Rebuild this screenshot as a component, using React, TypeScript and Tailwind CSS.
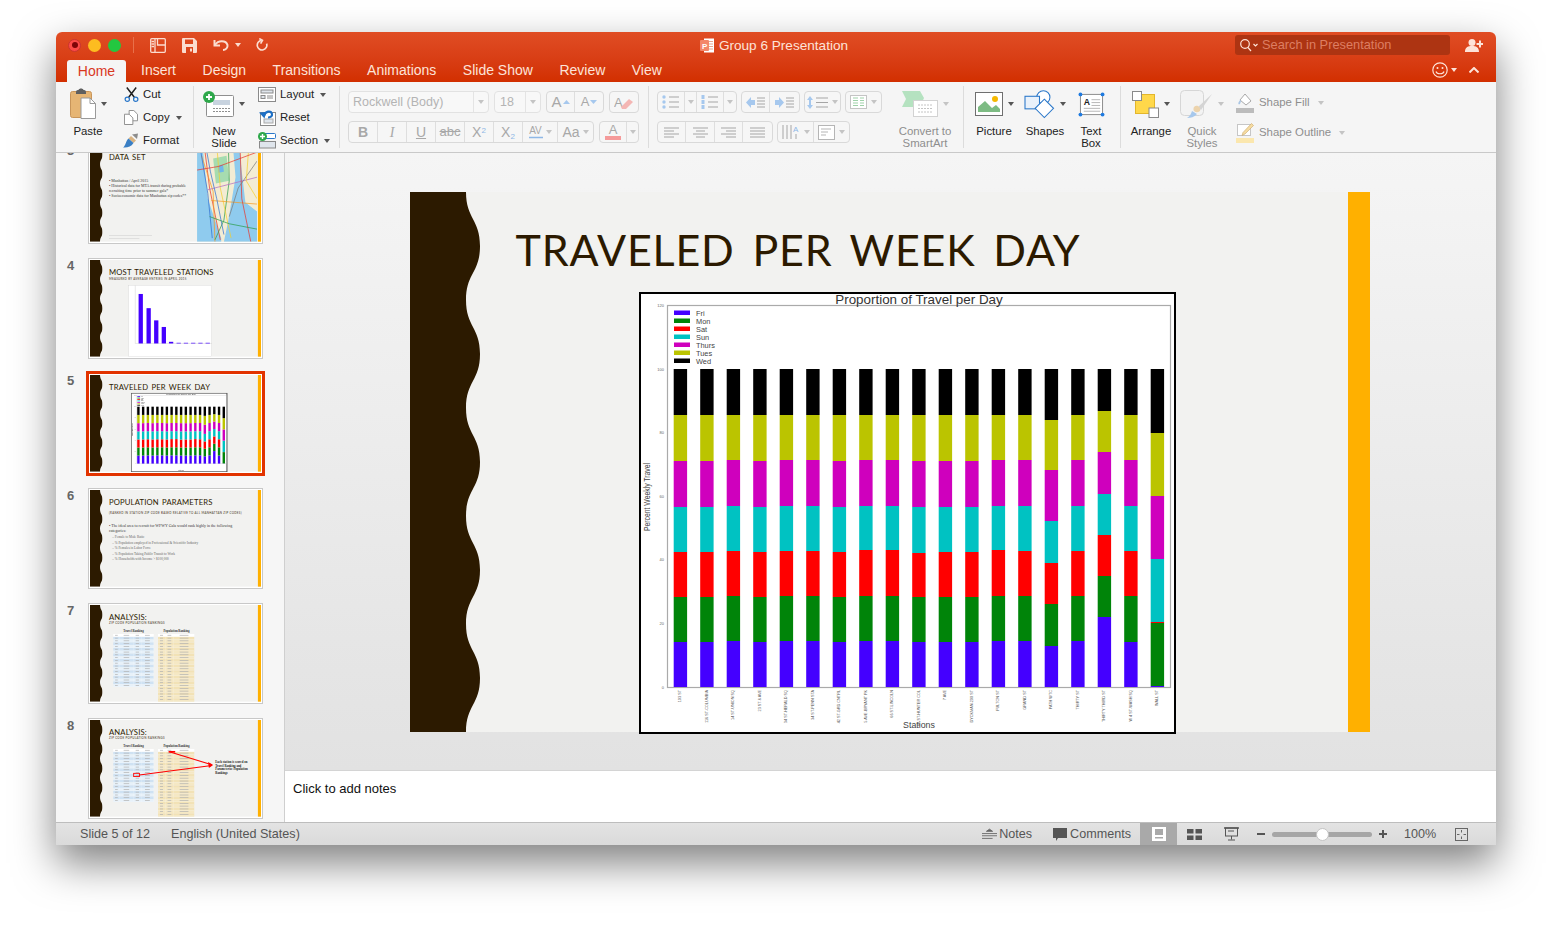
import type { ReactNode } from 'react';

const STATIONS = ['103 ST', '116 ST-COLUMBIA', '14 ST-UNION SQ', '23 ST-6 AVE', '34 ST-HERALD SQ', '34 ST-PENN STA', '42 ST-GRD CNTRL', '5 AVE-BRYANT PK', '66 ST-LINCOLN', '68 ST-HUNTER COL', '7 AVE', 'DYCKMAN-200 ST', 'FULTON ST', 'GRAND ST', 'PATH WTC', 'THIRTY ST', 'THIRTY THIRD ST', 'W 4 ST-WASH SQ', 'WALL ST'];
const COLORS = ['#4400ff', '#008409', '#ff0000', '#00c2c2', '#cf00bd', '#bbc400', '#000000'];
const LEGEND = ['Fri', 'Mon', 'Sat', 'Sun', 'Thurs', 'Tues', 'Wed'];

// top edge of each stacked segment, in chart pixels
const TOPS = [
  [642, 597, 552, 507, 461, 415], [642, 597, 552, 507, 461, 415], [641, 596, 551, 506, 460, 415],
  [642, 597, 552, 507, 461, 415], [641, 596, 551, 506, 460, 415], [641, 596, 551, 506, 460, 415],
  [642, 597, 552, 507, 461, 415], [641, 596, 550, 506, 460, 415], [641, 596, 550, 506, 460, 415],
  [642, 597, 553, 507, 461, 415], [642, 597, 552, 507, 461, 415], [642, 597, 552, 507, 461, 415],
  [641, 596, 550, 506, 460, 415], [641, 596, 551, 506, 460, 415], [646, 604, 563, 521, 470, 420],
  [641, 596, 551, 506, 460, 415], [617, 576, 535, 494, 452, 411], [642, 596, 551, 506, 460, 415],
  [686, 623, 622, 559, 496, 433],
];

function Chart({ className, frame = 2 }: { className?: string; frame?: number }) {
  return (
    <svg viewBox="0 0 537 442" className={className}>
      <rect x="1" y="1" width="535" height="440" fill="#fff" stroke={frame > 2 ? '#555' : '#000'} strokeWidth={frame} />
      <rect x="28.5" y="13.5" width="503" height="382" fill="#fff" stroke="#aaa" strokeWidth="1.2" />
      <text x="280" y="12" textAnchor="middle" fontSize="13.4" fill="#333" fontFamily="Liberation Sans">Proportion of Travel per Day</text>
      {LEGEND.map((l, i) => (
        <g key={l}>
          <rect x="35" y={18.5 + i * 8} width="16" height="4.5" fill={COLORS[i]} />
          <text x="57" y={23.5 + i * 8} fontSize="7.4" fill="#444" fontFamily="Liberation Sans">{l}</text>
        </g>
      ))}
      {[120, 100, 80, 60, 40, 20, 0].map((t, i) => (
        <text key={t} x="25" y={15 + i * 63.6} textAnchor="end" fontSize="4" fill="#666" fontFamily="Liberation Sans">{t}</text>
      ))}
      <text transform="translate(11 205) rotate(-90)" textAnchor="middle" fontSize="9" fill="#444" fontFamily="Liberation Sans" textLength="68" lengthAdjust="spacingAndGlyphs">Percent Weekly Travel</text>
      {TOPS.map((tops, b) => {
        const x = 34.7 + b * 26.5;
        const edges = [687, ...tops, 369];
        return (
          <g key={b}>
            {COLORS.map((c, s) => (
              <rect key={c} x={x} y={edges[s + 1] - 292} width="13.4" height={edges[s] - edges[s + 1]} fill={c} />
            ))}
            <text transform={`translate(${x + 7.5} 398) rotate(-90)`} textAnchor="end" fontSize="3.8" fill="#555" fontFamily="Liberation Sans">{STATIONS[b]}</text>
          </g>
        );
      })}
      <text x="280" y="436" textAnchor="middle" fontSize="8.8" fill="#444" fontFamily="Liberation Sans">Stations</text>
    </svg>
  );
}

const WAVE = 'M0 0H56' + [0, 108, 216, 324, 432].map((y) => `C56 ${y + 27} 70 ${y + 27} 70 ${y + 54}C70 ${y + 81} 56 ${y + 81} 56 ${y + 108}`).join('') + 'V540H0Z';

function SlideFrame({ title, sub, subTop = 'top-[90px]', thumb, children }: { title: string; sub?: string; subTop?: string; thumb?: boolean; children?: ReactNode }) {
  return (
    <div className="relative w-[960px] h-[540px] shrink-0 bg-[#f2f2f0]">
      <svg viewBox="0 0 70 540" className="absolute left-0 top-0 w-[70px] h-[540px]"><path d={WAVE} fill="#2c1a00" /></svg>
      <div className="absolute right-0 top-0 w-[22px] h-[540px] bg-[#ffb000]" />
      <div className={`absolute left-[106px] ${thumb ? 'top-[38px]' : 'top-[28px]'} font-['Lato',sans-serif] text-[43px] leading-[60px] tracking-[0.8px] [word-spacing:6px] text-[#2c1a00] whitespace-nowrap`}>{title}</div>
      {sub && <div className={`absolute left-[106px] ${subTop} font-['Lato',sans-serif] text-[16px] leading-[22px] tracking-[1.8px] text-[#3a2a10] whitespace-nowrap`}>{sub}</div>}
      {children}
    </div>
  );
}

function SubwayMap() {
  return (
    <svg viewBox="0 0 335 540" className="absolute left-[598px] top-0 w-[335px] h-[540px]" preserveAspectRatio="none">
      <rect width="335" height="540" fill="#f3ecd4" />
      <path d="M0 0H30L60 300 135 520V540H0Z" fill="#8fcbee" />
      <path d="M200 0L215 180 175 420 150 540H335V370L270 320 250 150 235 0Z" fill="#8fcbee" />
      <path d="M270 320L335 280V370Z" fill="#f3ecd4" />
      <path d="M90 75L165 60 180 200 105 215Z" fill="#a6dcb0" />
      <path d="M115 115L145 110 150 150 120 155Z" fill="#6fb7e8" />
      <g fill="none" strokeWidth="4">
        <path d="M40 0L70 240 130 530" stroke="#e8352b" />
        <path d="M25 60L90 260 100 540" stroke="#f59a23" />
        <path d="M175 0L180 200 150 420 100 530" stroke="#2a9d4a" />
        <path d="M15 0L60 270 85 520" stroke="#2f6fd0" />
        <path d="M110 0L130 240 190 520" stroke="#f5cf2d" />
        <path d="M60 250L335 180" stroke="#b06cc0" />
        <path d="M80 310L335 330" stroke="#f59a23" />
        <path d="M240 0L250 300 300 540" stroke="#e8352b" />
        <path d="M335 90L230 240 180 400" stroke="#7a7a7a" />
        <path d="M55 40L75 150 110 300 150 500" stroke="#2f6fd0" />
        <path d="M290 0L275 200 335 300" stroke="#f5cf2d" />
        <path d="M70 400L180 440 335 470" stroke="#2a9d4a" />
        <path d="M0 140L120 120 335 40" stroke="#e8352b" />
      </g>
    </svg>
  );
}

function Bullet({ children, sub }: { children: ReactNode; sub?: boolean }) {
  return <li className={sub ? 'pl-[18px] text-[19px] leading-[31px] text-[#666]' : 'text-[22px] leading-[24px] text-[#333] mb-[8px]'}>{sub ? '– ' : '• '}{children}</li>;
}

function DataTable({ rows, cols, tint, light }: { rows: number; cols: string; tint: string; light: string }) {
  const cells = cols === 'travel' ? [36, 76, 46, 66] : [40, 48, 116];
  return (
    <div className="flex flex-col w-full">
      {Array.from({ length: rows }).map((_, r) => (
        <div key={r} className="flex h-[15.6px] border-b border-white" style={{ backgroundColor: r === 0 ? '#fff' : r % 2 ? tint : light }}>
          {cells.map((w, c) => (
            <div key={c} className="flex items-center justify-center border-r border-white" style={{ width: w }}>
              <div className="h-[4px] bg-[#b4b4b4]" style={{ width: w * 0.42 }} />
            </div>
          ))}
        </div>
      ))}
    </div>
  );
}

function AnalysisTables() {
  return (
    <>
      <div className="absolute left-[130px] top-[134px] w-[226px] font-['Liberation_Serif',serif] font-bold text-[17px] text-center text-[#333]">Travel Ranking</div>
      <div className="absolute left-[380px] top-[134px] w-[206px] font-['Liberation_Serif',serif] font-bold text-[17px] text-center text-[#333]">Population Ranking</div>
      <div className="absolute left-[130px] top-[162px] w-[226px]"><DataTable rows={19} cols="travel" tint="#cfe2f3" light="#e7f1f9" /></div>
      <div className="absolute left-[380px] top-[162px] w-[204px] h-[378px] overflow-hidden"><DataTable rows={25} cols="pop" tint="#f2e2b6" light="#f5e8c4" /></div>
    </>
  );
}

function slideFor(n: number, thumb = false) {
  if (n === 3) {
    return (
      <SlideFrame thumb={thumb} title="DATA SET">
        <SubwayMap />
        <ul className="absolute left-[106px] top-[186px] w-[465px] font-['Liberation_Serif',serif]">
          <Bullet>Manhattan / April 2015</Bullet>
          <Bullet>Historical data for MTA transit during probable recruiting time prior to summer gala*</Bullet>
          <Bullet>Socioeconomic data for Manhattan zip codes**</Bullet>
        </ul>
        <div className="absolute left-[106px] top-[505px] w-[240px] h-[3px] bg-[#cfcfcf]" />
        <div className="absolute left-[106px] top-[522px] w-[170px] h-[3px] bg-[#cfcfcf]" />
      </SlideFrame>
    );
  }
  if (n === 4) {
    const bars = [[31, 150], [55, 107], [78, 70], [101, 50], [123, 5], [146, 2], [168, 2], [190, 2], [212, 2], [234, 2]];
    return (
      <SlideFrame thumb={thumb} title="MOST TRAVELED STATIONS" sub="MEASURED BY AVERAGE ENTRIES IN APRIL 2015" subTop="top-[97px]">
        <svg viewBox="0 0 253 217" className="absolute left-[212px] top-[140px] w-[471px] h-[400px]">
          <rect x="0.5" y="0.5" width="252" height="216" fill="#fff" stroke="#ccc" />
          <path d="M21 1V177H253" fill="none" stroke="#bbb" strokeWidth="1" />
          {bars.map(([x, h]) => <rect key={x} x={x} y={177 - h} width="13" height={h} fill="#4400ff" />)}
        </svg>
      </SlideFrame>
    );
  }
  if (n === 5) return <SlideFrame thumb={thumb} title="TRAVELED PER WEEK DAY"><Chart frame={thumb ? 6 : 2} className="absolute left-[229px] top-[100px] w-[537px] h-[442px]" /></SlideFrame>;
  if (n === 6) {
    return (
      <SlideFrame thumb={thumb} title="POPULATION PARAMETERS" sub="(RANKED IN STATION ZIP CODE BASED RELATIVE TO ALL MANHATTAN ZIP CODES)" subTop="top-[118px]">
        <ul className="absolute left-[106px] top-[190px] w-[720px] font-['Liberation_Serif',serif]">
          <Bullet>The ideal area to recruit for WFWY Gala would rank highly in the following categories:</Bullet>
          <Bullet sub>Female to Male Ratio</Bullet>
          <Bullet sub>% Population employed in Professional &amp; Scientific Industry</Bullet>
          <Bullet sub>% Females in Labor Force</Bullet>
          <Bullet sub>% Population Taking Public Transit to Work</Bullet>
          <Bullet sub>% Households with Income &gt; $100,000</Bullet>
        </ul>
      </SlideFrame>
    );
  }
  return (
    <SlideFrame thumb={thumb} title="ANALYSIS:" sub="ZIP CODE POPULATION RANKINGS">
      <AnalysisTables />
      {n === 8 && (
        <>
          <svg viewBox="0 0 960 540" className="absolute left-0 top-0 w-[960px] h-[540px]">
            <rect x="244" y="298" width="32" height="18" fill="none" stroke="#f00" strokeWidth="5" />
            <rect x="439" y="173" width="37" height="9" fill="#f00" />
            <path d="M443 177L680 250M276 307L680 254" stroke="#f00" strokeWidth="6" fill="none" />
            <path d="M688 252L660 234 664 268Z" fill="#f00" />
          </svg>
          <div className="absolute left-[700px] top-[222px] w-[212px] font-['Liberation_Serif',serif] font-bold text-[17px] leading-[22px] text-[#222]">Each station is scored on Travel Ranking and Parameterize Population Rankings</div>
        </>
      )}
    </SlideFrame>
  );
}

function Thumb({ n, active }: { n: number; active?: boolean }) {
  return (
    <div className="flex h-[101px] mb-[14px]">
      <div className="w-[32px] pl-[11px] text-[13px] leading-[15px] font-bold text-[#666]">{n}</div>
      <div className={active ? 'w-[175px] h-[101px] p-px bg-white border border-[#e23300] outline-2 outline-[#e23300]' : 'w-[175px] h-[101px] p-px bg-white border border-[#c8c8c8]'}>
        <div className="w-[171px] h-[97px] overflow-hidden">
          <div className="origin-top-left scale-[0.179] w-[960px] h-[540px]">{slideFor(n, true)}</div>
        </div>
      </div>
    </div>
  );
}

/* ---------- ribbon icons ---------- */

function Caret({ className = 'text-[#555]' }: { className?: string }) {
  return <svg viewBox="0 0 6 4" className={`w-[6px] h-[4px] shrink-0 ${className}`}><path d="M0 0H6L3 4Z" fill="currentColor" /></svg>;
}

const PasteIcon = () => (
  <svg viewBox="0 0 26 32" className="w-[26px] h-[32px]">
    <rect x="0.5" y="3.5" width="21" height="26" rx="2" fill="#e6b574" stroke="#c8955a" />
    <path d="M6 4C6 2 8 2 8.5 2 9 0 13 0 13.5 2 14 2 16 2 16 4V6H6Z" fill="#5f5f5f" />
    <path d="M11 10H20L25.5 15.5V30.5H11Z" fill="#fff" stroke="#9a9a9a" />
    <path d="M20 10V15.5H25.5" fill="none" stroke="#9a9a9a" />
  </svg>
);
const CutIcon = () => (
  <svg viewBox="0 0 16 16" className="w-[15px] h-[15px]" fill="none">
    <path d="M3 0.5L11 11M13 0.5L5 11" stroke="#222" strokeWidth="1.6" />
    <circle cx="3.5" cy="13" r="2.3" stroke="#2a77c9" strokeWidth="1.3" />
    <circle cx="12.5" cy="13" r="2.3" stroke="#2a77c9" strokeWidth="1.3" />
  </svg>
);
const CopyIcon = () => (
  <svg viewBox="0 0 15 16" className="w-[14px] h-[15px]" fill="#fff" stroke="#8a8a8a">
    <path d="M5.5 0.5H10.5L14.5 4.5V11.5H5.5Z" />
    <path d="M0.5 4.5H5.5L9.5 8.5V15.5H0.5Z" />
  </svg>
);
const FormatIcon = () => (
  <svg viewBox="0 0 16 15" className="w-[16px] h-[15px]">
    <path d="M9 1.5L15 0.5 14 6Z" fill="#8c8c8c" />
    <path d="M8 3L13 7.5 10.5 10 5.5 5.5Z" fill="#d9b382" />
    <path d="M5.5 5.5L10.5 10C8 14 4 15 0 14.5 3 12.5 2.5 8 5.5 5.5Z" fill="#3a7fc4" />
  </svg>
);
const NewSlideIcon = () => (
  <svg viewBox="0 0 31 27" className="w-[31px] h-[27px]">
    <rect x="3.5" y="4.5" width="27" height="21" rx="1" fill="#fff" stroke="#8f8f8f" />
    <rect x="10" y="9" width="17" height="5" fill="#c8d3df" />
    <path d="M10 17.5H27M10 20.5H27" stroke="#8f8f8f" strokeDasharray="2 1" />
    <circle cx="6" cy="6" r="6" fill="#2ea84a" />
    <path d="M6 3V9M3 6H9" stroke="#fff" strokeWidth="1.8" />
  </svg>
);
const LayoutIcon = () => (
  <svg viewBox="0 0 18 15" className="w-[18px] h-[15px]" fill="none" stroke="#8a8a8a">
    <rect x="0.5" y="0.5" width="17" height="14" fill="#fff" />
    <rect x="3" y="3" width="12" height="3" fill="#dfe5ec" />
    <rect x="3" y="8.5" width="4" height="3" fill="#dfe5ec" />
    <path d="M9 9H15M9 11H15" />
  </svg>
);
const ResetIcon = () => (
  <svg viewBox="0 0 18 17" className="w-[18px] h-[17px]" fill="none">
    <rect x="2.5" y="3.5" width="15" height="13" fill="#fff" stroke="#8a8a8a" />
    <rect x="6" y="10" width="9" height="4" fill="#dfe5ec" stroke="#a8a8a8" />
    <path d="M6 7C7 2 13 1 14 5 14.5 7.5 12 8.5 10 8.5" stroke="#1e6fc4" strokeWidth="2.2" />
    <path d="M1 3.5L8 3 6.5 9.5Z" fill="#1e6fc4" />
  </svg>
);
const SectionIcon = () => (
  <svg viewBox="0 0 18 17" className="w-[18px] h-[17px]" fill="none">
    <rect x="5.5" y="1.5" width="12" height="5" rx="1" fill="#fff" stroke="#2a77c9" />
    <rect x="1.5" y="9.5" width="16" height="6.5" fill="#dfe5ec" stroke="#8a8a8a" />
    <circle cx="4.5" cy="4.5" r="4.5" fill="#2ea84a" />
    <path d="M4.5 2V7M2 4.5H7" stroke="#fff" strokeWidth="1.4" />
  </svg>
);
const PictureIcon = () => (
  <svg viewBox="0 0 28 24" className="w-[28px] h-[24px]">
    <rect x="0.5" y="0.5" width="27" height="23" fill="#fff" stroke="#6f6f6f" />
    <circle cx="20" cy="7" r="3" fill="#f5b800" />
    <path d="M3 20V15L10 9 17 16 21 13 25 17V20Z" fill="#7dbb83" />
  </svg>
);
const ShapesIcon = () => (
  <svg viewBox="0 0 32 30" className="w-[31px] h-[29px]" fill="none" stroke="#2a77c9" strokeWidth="1.1">
    <circle cx="20" cy="7.5" r="6.8" fill="#fff" />
    <rect x="1" y="6.5" width="15" height="13" fill="#e9f1fa" />
    <path d="M21 9.5L30.5 19 21 28.5 11.5 19Z" fill="#fff" />
  </svg>
);
const TextBoxIcon = () => (
  <svg viewBox="0 0 28 26" className="w-[27px] h-[25px]">
    <rect x="2.5" y="2.5" width="23" height="21" fill="#fff" stroke="#8a8a8a" />
    <text x="6" y="14" fontSize="9" fontWeight="700" fontFamily="Liberation Sans" fill="#222">A</text>
    <path d="M14 8H23M14 11H23M14 14H23M6 17H23M6 20H23" stroke="#b5b5b5" />
    {[[2.5, 2.5], [25.5, 2.5], [2.5, 23.5], [25.5, 23.5]].map(([x, y]) => <circle key={x * 10 + y} cx={x} cy={y} r="2" fill="#1e7ae0" />)}
  </svg>
);
const ArrangeIcon = () => (
  <svg viewBox="0 0 27 27" className="w-[27px] h-[27px]">
    <rect x="3.5" y="3.5" width="19" height="19" fill="#ffd84a" stroke="#e3b62b" />
    <rect x="0.5" y="0.5" width="9" height="9" fill="#fff" stroke="#8a8a8a" />
    <rect x="17" y="17" width="9.5" height="9.5" fill="#fff" stroke="#8a8a8a" />
  </svg>
);
const QuickStylesIcon = () => (
  <svg viewBox="0 0 33 29" className="w-[33px] h-[29px]">
    <rect x="0.5" y="0.5" width="23" height="25" rx="4" fill="#f3f3f3" stroke="#d6d6d6" />
    <path d="M32 4L18 17 21 20Z" fill="#d4d4d4" />
    <path d="M14 17C17 14 21 17 20 21 16 24 12 21 14 17Z" fill="#ecd3ac" />
    <path d="M12 21L17 24C14 27 11 28 7 28 10 26 11 24 12 21Z" fill="#a7c8ec" />
  </svg>
);
const ShapeFillIcon = () => (
  <svg viewBox="0 0 18 20" className="w-[18px] h-[20px]">
    <path d="M9 1L15 8 10 12 4 7Z" fill="#fff" stroke="#a9a9a9" />
    <path d="M4 7C3 9 1.5 10 3 11.5 4.5 11 4.5 9 5 8Z" fill="#a9c6e5" />
    <rect y="15" width="18" height="5" fill="#bcbcbc" />
  </svg>
);
const ShapeOutlineIcon = () => (
  <svg viewBox="0 0 18 20" className="w-[18px] h-[20px]">
    <rect x="1.5" y="1.5" width="13" height="11" fill="#fff" stroke="#c6c6c6" />
    <path d="M15.5 0.5L17.5 2.5 9 11 6 12.5 7 9.5Z" fill="#f6dba0" stroke="#c9a86a" strokeWidth="0.6" />
    <rect y="15" width="18" height="5" fill="#fbe7ae" />
  </svg>
);
const SmartArtIcon = () => (
  <svg viewBox="0 0 36 26" className="w-[36px] h-[26px]">
    <path d="M0 0H18L22 7 18 16H0L4 8Z" fill="#b5e2c0" />
    <rect x="11.5" y="9.5" width="24" height="16" fill="#fff" stroke="#d2d2d2" />
    <path d="M16 14H31M16 17.5H31M16 21H31" stroke="#c4c4c4" strokeDasharray="2 1" />
  </svg>
);

function TallButton({ w, icon, lines, caret, dim }: { w: string; icon: ReactNode; lines: string[]; caret?: boolean; dim?: boolean }) {
  return (
    <div className={`${w} flex flex-col items-center shrink-0`}>
      <div className="h-[43px] flex items-center gap-[5px] pt-[1px]">
        {icon}
        {caret && <Caret className={dim ? 'text-[#c4c4c4]' : 'text-[#555]'} />}
      </div>
      {lines.map((l) => <div key={l} className={dim ? 'leading-[12px] text-[#8e8e8e] whitespace-nowrap' : 'leading-[12px] text-[#222] whitespace-nowrap'}>{l}</div>)}
    </div>
  );
}

function SmallButton({ icon, label, caret, w = 'w-[16px]' }: { icon: ReactNode; label: string; caret?: boolean; w?: string }) {
  return (
    <div className="h-[23px] flex items-center gap-[4px] text-[#222]">
      <div className={`${w} flex justify-center`}>{icon}</div>
      <span>{label}</span>
      {caret && <Caret className="ml-[2px] text-[#555]" />}
    </div>
  );
}

function Seg({ items, className = '' }: { items: { w: string; c: ReactNode }[]; className?: string }) {
  return (
    <div className={`h-[22px] flex rounded-[4px] border border-[#d9d9d9] bg-[#f6f6f6] text-[#a8a8a8] divide-x divide-[#dedede] ${className}`}>
      {items.map((it, i) => <div key={i} className={`${it.w} flex items-center justify-center gap-[4px]`}>{it.c}</div>)}
    </div>
  );
}

const Lines = ({ align = 'left' }: { align?: 'left' | 'center' | 'right' | 'full' }) => {
  const d = { left: 'M0 1H15M0 4H10M0 7H15M0 10H10', center: 'M0 1H15M3 4H12M0 7H15M3 10H12', right: 'M0 1H15M5 4H15M0 7H15M5 10H15', full: 'M0 1H15M0 4H15M0 7H15M0 10H15' }[align];
  return <svg viewBox="0 0 15 11" className="w-[15px] h-[11px]"><path d={d} stroke="#a6a6a6" fill="none" /></svg>;
};
const ListIcon = ({ num }: { num?: boolean }) => (
  <svg viewBox="0 0 18 14" className="w-[18px] h-[14px]">
    {[2, 7, 12].map((y) => (num
      ? <rect key={y} x="0.5" y={y - 2} width="3" height="4" fill="#a6c8ee" />
      : <circle key={y} cx="2" cy={y} r="1.7" fill="#a6c8ee" />))}
    <path d="M7 2H17M7 7H17M7 12H17" stroke="#a6a6a6" />
  </svg>
);
const IndentIcon = ({ flip }: { flip?: boolean }) => (
  <svg viewBox="0 0 19 11" className="w-[19px] h-[11px]">
    <path d={flip ? 'M0 3H4V0L9 5.5 4 11V8H0Z' : 'M9 3H5V0L0 5.5 5 11V8H9Z'} fill="#a6c8ee" />
    <path d="M11 1H19M11 4H19M11 7H19M11 10H19" stroke="#a6a6a6" />
  </svg>
);

/* ---------- page ---------- */

export default function App() {
  return (
    <div className="h-[925px] bg-white pl-[56px] pt-[32px] overflow-hidden font-['Liberation_Sans',Arial,sans-serif]">
      <div className="w-[1440px] h-[813px] flex flex-col rounded-t-[6px] overflow-hidden bg-white shadow-[0_18px_42px_rgba(0,0,0,0.5)]">
        {/* title bar + tabs */}
        <div className="h-[50px] shrink-0 bg-gradient-to-b from-[#e04d24] to-[#d22f00] flex flex-col">
          <div className="h-[26px] grid grid-cols-[1fr_auto_1fr] items-center">
            <div className="flex items-center pl-[12px]">
              <div className="w-[13px] h-[13px] rounded-full bg-[#fc4a47] border border-[#c8352f] flex items-center justify-center"><div className="w-[6px] h-[6px] rounded-full bg-[#7e0508]" /></div>
              <div className="w-[13px] h-[13px] rounded-full bg-[#fdbc20] ml-[7px]" />
              <div className="w-[13px] h-[13px] rounded-full bg-[#23c740] ml-[7px]" />
              <div className="w-px h-[16px] bg-[#e8704a] ml-[12px]" />
              <svg viewBox="0 0 16 15" className="w-[16px] h-[15px] ml-[16px]" fill="none" stroke="#fbdccf" strokeWidth="1.3"><rect x="0.7" y="0.7" width="14.6" height="13.6" rx="1" /><path d="M5 1V14M7.5 1V7H15" /><path d="M1.5 3.5H4M1.5 6H4M1.5 8.5H4" /></svg>
              <svg viewBox="0 0 15 15" className="w-[15px] h-[15px] ml-[16px]" fill="#fbdccf"><path fillRule="evenodd" d="M1 0H12L15 3V14A1 1 0 0 1 14 15H1A1 1 0 0 1 0 14V1A1 1 0 0 1 1 0ZM3 1.5V6H11V1.5ZM4 9V15H11V9Z" /><rect x="8" y="10.5" width="2" height="3" /></svg>
              <svg viewBox="0 0 16 12" className="w-[16px] h-[12px] ml-[16px]" fill="none" stroke="#fbdccf" strokeWidth="2"><path d="M1.5 1V6.5H7" /><path d="M2 6C5 1 13 1 14.5 6 15 9 12.5 11 10 11" /></svg>
              <Caret className="ml-[6px] text-[#fbdccf]" />
              <svg viewBox="0 0 13 15" className="w-[12px] h-[14px] ml-[15px]" fill="none" stroke="#fbdccf" strokeWidth="1.8"><path d="M6 2.5A5.2 5.2 0 1 0 11.5 6" /><path d="M3.5 0.5L7 2.5 5 6" /></svg>
            </div>
            <div className="flex items-center gap-[5px] text-[13.6px] text-[#fde3d8] pr-[4px] pt-[2px]">
              <svg viewBox="0 0 14 15" className="w-[14px] h-[15px]"><rect x="4" y="0.5" width="10" height="14" fill="#fff" /><path d="M9 3.5H13M9 6H13M9 8.5H13M9 11H13" stroke="#e8a58e" /><rect y="2" width="9" height="11" rx="1" fill="#f3866a" /><text x="2" y="11" fontSize="8" fontWeight="700" fill="#fff" fontFamily="Liberation Sans">P</text></svg>
              <span>Group 6 Presentation</span>
            </div>
            <div className="flex items-center justify-end pr-[13px]">
              <div className="w-[215px] h-[20px] rounded-[3px] bg-[#ad3412] flex items-center pl-[4px] gap-[2px] text-[12.8px] text-[#dd7e62] mr-[15px]">
                <svg viewBox="0 0 20 14" className="w-[20px] h-[14px]" fill="none" stroke="#fde3d8" strokeWidth="1.2"><circle cx="6" cy="6" r="4.3" /><path d="M9 9.5L12 13M14.5 6L16.5 8 18.5 6" /></svg>
                <span className="ml-[1px]">Search in Presentation</span>
              </div>
              <svg viewBox="0 0 18 13" className="w-[18px] h-[13px]" fill="#fde3d8"><circle cx="7" cy="3.5" r="3.5" /><path d="M0 13C0 8 3 7 7 7S14 8 14 13ZM14 1.5H16V4H18V6H16V8.5H14V6H11.5V4H14Z" /></svg>
            </div>
          </div>
          <div className="h-[24px] flex items-end text-[14px] text-[#fde3d8]">
            <div className="ml-[11px] w-[59px] h-[22px] bg-[#f5f5f5] rounded-t-[3px] flex items-center justify-center text-[#d9381e]">Home</div>
            <div className="flex h-[24px] items-center gap-[26.5px] ml-[15px]">
              <span>Insert</span><span>Design</span><span>Transitions</span><span>Animations</span><span>Slide Show</span><span>Review</span><span>View</span>
            </div>
            <div className="ml-auto h-[24px] flex items-center pr-[17px]">
              <svg viewBox="0 0 16 16" className="w-[16px] h-[16px]" fill="none" stroke="#fde3d8" strokeWidth="1.2"><circle cx="8" cy="8" r="7.2" /><circle cx="5.5" cy="6" r="1" fill="#fde3d8" stroke="none" /><circle cx="10.5" cy="6" r="1" fill="#fde3d8" stroke="none" /><path d="M4 9.5C5 12.5 11 12.5 12 9.5" /></svg>
              <Caret className="ml-[3px] text-[#fde3d8]" />
              <svg viewBox="0 0 10 6" className="w-[10px] h-[6px] ml-[12px]" fill="none" stroke="#fde3d8" strokeWidth="2"><path d="M0.5 5.5L5 1 9.5 5.5" /></svg>
            </div>
          </div>
        </div>

        {/* ribbon */}
        <div className="h-[71px] shrink-0 bg-[#f5f5f5] border-b border-[#c9c9c9] flex text-[11.4px]">
          <div className="w-[137px] pl-[10px] flex">
            <TallButton w="w-[44px]" icon={<PasteIcon />} lines={['Paste']} caret />
            <div className="ml-[13px] mt-px">
              <SmallButton icon={<CutIcon />} label="Cut" />
              <SmallButton icon={<CopyIcon />} label="Copy" caret />
              <SmallButton icon={<FormatIcon />} label="Format" />
            </div>
          </div>
          <div className="w-px h-[62px] mt-[4px] bg-[#dcdcdc]" />
          <div className="w-[145px] flex">
            <TallButton w="w-[60px]" icon={<NewSlideIcon />} lines={['New', 'Slide']} caret />
            <div className="ml-[4px] mt-px">
              <SmallButton w="w-[18px]" icon={<LayoutIcon />} label="Layout" caret />
              <SmallButton w="w-[18px]" icon={<ResetIcon />} label="Reset" />
              <SmallButton w="w-[18px]" icon={<SectionIcon />} label="Section" caret />
            </div>
          </div>
          <div className="w-px h-[62px] mt-[4px] bg-[#dcdcdc]" />
          <div className="w-[308px] pl-[8px] pt-[9px] flex flex-col gap-[8px]">
            <div className="flex text-[12.5px]">
              <div className="w-[141px] h-[22px] rounded-[4px] border border-[#e2e2e2] bg-[#f8f8f8] flex items-center justify-between pl-[4px] pr-[4px] text-[#b4b4b4]">Rockwell (Body)<span className="flex items-center gap-[4px]"><span className="w-px h-[20px] bg-[#e4e4e4]" /><Caret className="text-[#c4c4c4]" /></span></div>
              <div className="w-[47px] h-[22px] ml-[5px] rounded-[4px] border border-[#e2e2e2] bg-[#f8f8f8] flex items-center justify-between pl-[5px] pr-[4px] text-[#b4b4b4]">18<span className="flex items-center gap-[4px]"><span className="w-px h-[20px] bg-[#e4e4e4]" /><Caret className="text-[#c4c4c4]" /></span></div>
              <Seg className="ml-[5px] text-[15px]" items={[
                { w: 'w-[28px]', c: <span className="flex items-center gap-px">A<svg viewBox="0 0 7 4" className="w-[7px] h-[4px]"><path d="M0 4L3.5 0 7 4Z" fill="#a6c8ee" /></svg></span> },
                { w: 'w-[28px]', c: <span className="flex items-center gap-px text-[13px]">A<svg viewBox="0 0 7 4" className="w-[7px] h-[4px]"><path d="M0 0L3.5 4 7 0Z" fill="#a6c8ee" /></svg></span> },
              ]} />
              <div className="w-[30px] h-[22px] ml-[5px] rounded-[4px] border border-[#d9d9d9] bg-[#f6f6f6] flex items-center justify-center">
                <svg viewBox="0 0 20 17" className="w-[20px] h-[17px]"><text x="0" y="13" fontSize="13" fill="#a8a8a8" fontFamily="Liberation Sans">A</text><path d="M7 13L15 5 19 8 12 15H8Z" fill="#f4b6b4" /></svg>
              </div>
            </div>
            <div className="flex">
              <Seg className="text-[14px]" items={[
                { w: 'w-[29px]', c: <b>B</b> },
                { w: 'w-[29px]', c: <i className="font-['Liberation_Serif',serif]">I</i> },
                { w: 'w-[29px]', c: <u>U</u> },
                { w: 'w-[29px]', c: <s className="text-[13px]">abc</s> },
                { w: 'w-[29px]', c: <span>X<sup className="text-[8px] text-[#8fb8e6]">2</sup></span> },
                { w: 'w-[29px]', c: <span>X<sub className="text-[8px] text-[#8fb8e6]">2</sub></span> },
                { w: 'w-[35px]', c: <span className="flex items-center gap-[3px] text-[10px] leading-[10px]"><span className="flex flex-col items-center">AV<svg viewBox="0 0 14 3" className="w-[14px] h-[3px]"><path d="M0 1.5H14" stroke="#8fb8e6" strokeWidth="1.5" /></svg></span><Caret className="text-[#c4c4c4]" /></span> },
                { w: 'w-[35px]', c: <span className="flex items-center gap-[3px]">Aa<Caret className="text-[#c4c4c4]" /></span> },
              ]} />
              <Seg className="ml-[5px]" items={[
                { w: 'w-[27px]', c: <span className="flex flex-col items-center text-[13px] leading-[12px]">A<span className="w-[16px] h-[4px] bg-[#f59a9a]" /></span> },
                { w: 'w-[11px]', c: <Caret className="text-[#c4c4c4]" /> },
              ]} />
            </div>
          </div>
          <div className="w-px h-[62px] mt-[4px] bg-[#dcdcdc]" />
          <div className="w-[314px] pl-[8px] flex">
            <div className="w-[225px] pt-[9px] flex flex-col gap-[8px] shrink-0">
              <div className="flex gap-[4px]">
                <Seg items={[
                  { w: 'w-[27px]', c: <ListIcon /> },
                  { w: 'w-[12px]', c: <Caret className="text-[#c4c4c4]" /> },
                  { w: 'w-[27px]', c: <ListIcon num /> },
                  { w: 'w-[12px]', c: <Caret className="text-[#c4c4c4]" /> },
                ]} />
                <Seg items={[{ w: 'w-[28px]', c: <IndentIcon /> }, { w: 'w-[29px]', c: <IndentIcon flip /> }]} />
                <Seg items={[{ w: 'w-[35px]', c: <><svg viewBox="0 0 21 13" className="w-[21px] h-[13px]"><path d="M3 0L6 4H0ZM3 13L6 9H0Z" fill="#a6c8ee" /><rect x="2" y="4" width="2" height="5" fill="#a6c8ee" /><path d="M9 2H21M9 6.5H21M9 11H21" stroke="#a6a6a6" /></svg><Caret className="text-[#c4c4c4]" /></> }]} />
                <Seg items={[{ w: 'w-[35px]', c: <><svg viewBox="0 0 17 14" className="w-[17px] h-[14px]"><rect x="0.5" y="0.5" width="16" height="13" fill="#fff" stroke="#c4c4c4" /><path d="M3 3H8M3 5.5H8M3 8H8M3 10.5H8M10 3H14M10 5.5H14M10 8H14M10 10.5H14" stroke="#9fd1a9" /></svg><Caret className="text-[#c4c4c4]" /></> }]} />
              </div>
              <div className="flex gap-[4px]">
                <Seg items={[{ w: 'w-[28px]', c: <Lines /> }, { w: 'w-[29px]', c: <Lines align="center" /> }, { w: 'w-[28px]', c: <Lines align="right" /> }, { w: 'w-[29px]', c: <Lines align="full" /> }]} />
                <Seg items={[
                  { w: 'w-[36px]', c: <><svg viewBox="0 0 18 16" className="w-[18px] h-[16px]"><path d="M1 1V15M5 1V15M9 1V15" stroke="#a6a6a6" /><text x="11" y="8" fontSize="8" fill="#8fb8e6" fontFamily="Liberation Sans">A</text><path d="M14 10V15" stroke="#a6a6a6" /></svg><Caret className="text-[#c4c4c4]" /></> },
                  { w: 'w-[35px]', c: <><svg viewBox="0 0 17 15" className="w-[17px] h-[15px]"><rect x="0.5" y="0.5" width="16" height="14" fill="#fff" stroke="#b5b5b5" /><path d="M3 4H13M3 7H10M3 10H8" stroke="#b5b5b5" /></svg><Caret className="text-[#c4c4c4]" /></> },
                ]} />
              </div>
            </div>
            <div className="ml-[8px] text-center">
              <TallButton w="w-[70px]" icon={<SmartArtIcon />} lines={['Convert to', 'SmartArt']} caret dim />
            </div>
          </div>
          <div className="w-px h-[62px] mt-[4px] bg-[#dcdcdc]" />
          <div className="w-[156px] pl-[1px] flex">
            <TallButton w="w-[58px]" icon={<PictureIcon />} lines={['Picture']} caret />
            <TallButton w="w-[44px]" icon={<ShapesIcon />} lines={['Shapes']} caret />
            <div className="ml-[2px]"><TallButton w="w-[44px]" icon={<TextBoxIcon />} lines={['Text', 'Box']} /></div>
          </div>
          <div className="w-px h-[62px] mt-[4px] bg-[#dcdcdc]" />
          <div className="flex-1 pl-[4px] flex">
            <TallButton w="w-[52px]" icon={<ArrangeIcon />} lines={['Arrange']} caret />
            <TallButton w="w-[50px]" icon={<QuickStylesIcon />} lines={['Quick', 'Styles']} caret dim />
            <div className="ml-[9px] pt-[11px] flex flex-col gap-[10px] text-[#8e8e8e]">
              <div className="h-[20px] flex items-center gap-[5px]"><ShapeFillIcon /><span>Shape Fill</span><Caret className="ml-[3px] text-[#c4c4c4]" /></div>
              <div className="h-[20px] flex items-center gap-[5px]"><ShapeOutlineIcon /><span>Shape Outline</span><Caret className="ml-[3px] text-[#c4c4c4]" /></div>
            </div>
          </div>
        </div>

        {/* workspace */}
        <div className="flex-1 min-h-0 flex">
          <div className="w-[229px] shrink-0 bg-[#f6f6f6] border-r border-[#cfcfcf] overflow-hidden">
            <div className="-mt-[10px]">
              {[3, 4, 5, 6, 7, 8].map((n) => <Thumb key={n} n={n} active={n === 5} />)}
            </div>
          </div>
          <div className="flex-1 min-w-0 flex flex-col">
            <div className="flex-1 min-h-0 bg-gradient-to-b from-[#f5f5f5] to-[#e2e2e2] flex justify-center pt-[39px] pr-[2px]">
              {slideFor(5)}
            </div>
            <div className="h-[52px] shrink-0 bg-white border-t border-[#d4d4d4] pl-[8px] pt-[10px] text-[13px] leading-[16px] text-[#111]">Click to add notes</div>
          </div>
        </div>

        {/* status bar */}
        <div className="h-[23px] shrink-0 bg-gradient-to-b from-[#e3e3e3] to-[#dadada] border-t border-[#bdbdbd] flex items-center pl-[24px] text-[12.6px] text-[#555]">
          <span>Slide 5 of 12</span>
          <span className="ml-[21px]">English (United States)</span>
          <div className="ml-auto flex items-center h-full">
            <svg viewBox="0 0 17 12" className="w-[15px] h-[12px]" fill="none" stroke="#666"><path d="M5 3L8.5 0.5 12 3Z" fill="#666" /><path d="M0 5.5H17M0 8H17M0 11H12" /></svg>
            <span className="ml-[2px]">Notes</span>
            <svg viewBox="0 0 14 13" className="w-[14px] h-[13px] ml-[21px]"><path d="M0 0H14V10H5L3 13V10H0Z" fill="#555" /></svg>
            <span className="ml-[3px]">Comments</span>
            <div className="w-[37px] h-full ml-[9px] bg-[#a9a9a9] flex items-center justify-center">
              <svg viewBox="0 0 14 14" className="w-[14px] h-[14px]"><path fillRule="evenodd" d="M0 0H14V14H0ZM3 2V8H11V2ZM3 10V11.5H11V10Z" fill="#fff" /></svg>
            </div>
            <svg viewBox="0 0 15 11" className="w-[15px] h-[11px] ml-[10px]" fill="#555"><rect width="6.5" height="4.5" /><rect x="8.5" width="6.5" height="4.5" /><rect y="6.5" width="6.5" height="4.5" /><rect x="8.5" y="6.5" width="6.5" height="4.5" /></svg>
            <svg viewBox="0 0 15 14" className="w-[15px] h-[14px] ml-[22px]" fill="none" stroke="#555"><path d="M0 1H15" strokeWidth="1.5" /><rect x="1.5" y="1" width="12" height="8" /><path d="M4 4H10M7.5 9V12.5M4 13H11" /></svg>
            <div className="w-[8px] h-[2px] bg-[#555] ml-[18px]" />
            <div className="relative w-[100px] h-[5px] ml-[7px] rounded-full bg-[#a6a6a6]">
              <div className="absolute left-[44px] -top-[4px] w-[13px] h-[13px] rounded-full bg-white border border-[#c4c4c4]" />
            </div>
            <div className="relative w-[8px] h-[8px] ml-[7px]"><div className="absolute left-0 top-[3px] w-[8px] h-[2px] bg-[#555]" /><div className="absolute left-[3px] top-0 w-[2px] h-[8px] bg-[#555]" /></div>
            <span className="ml-[17px] w-[31px] whitespace-nowrap">100%</span>
            <svg viewBox="0 0 13 13" className="w-[13px] h-[13px] ml-[20px] mr-[28px]" fill="none" stroke="#666"><rect x="0.5" y="0.5" width="12" height="12" /><path d="M6.5 2V4.5M6.5 8.5V11M2 6.5H4.5M8.5 6.5H11" /></svg>
          </div>
        </div>
      </div>
    </div>
  );
}
